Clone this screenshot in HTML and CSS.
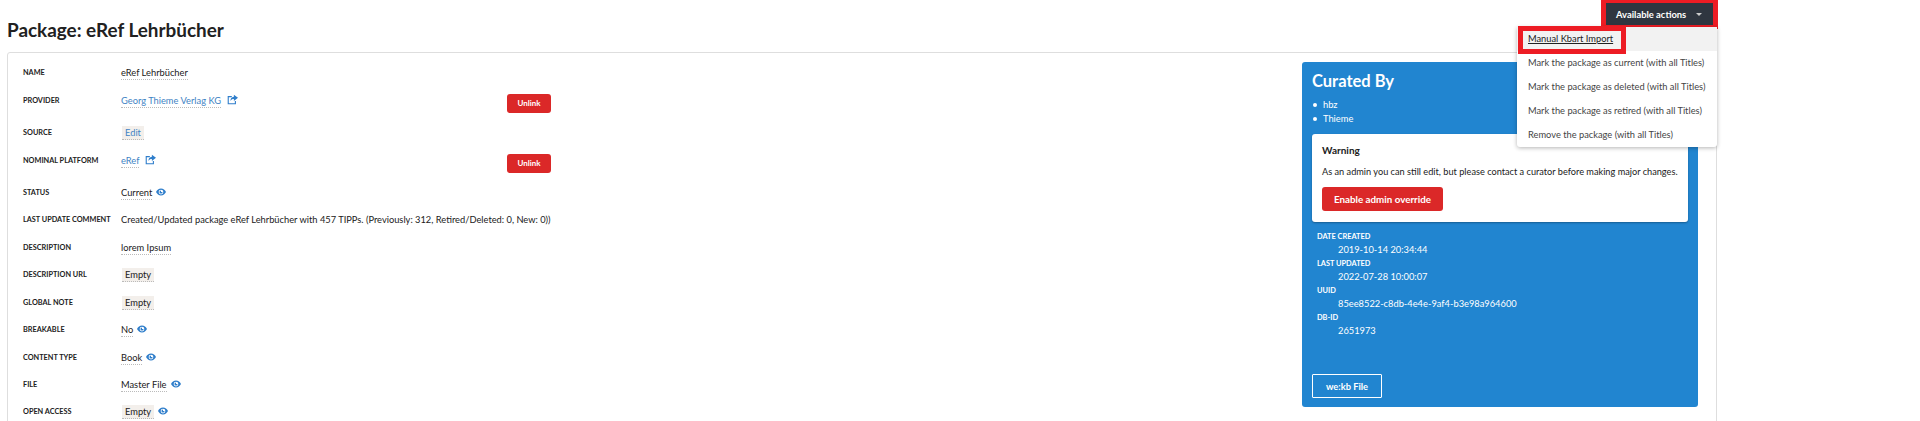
FILE: index.html
```html
<!DOCTYPE html>
<html lang="en">
<head>
  <meta charset="UTF-8">
  <title>Package: eRef Lehrbücher</title>
  <link rel="stylesheet" href="styles.css">
</head>
<body>
  <svg class="defs" width="0" height="0">
    <symbol id="eye" viewBox="0 0 16 16">
      <path d="M8 2.5C4.400 2.500 1.600 5 0 8c1.600 3 4.400 5.500 8 5.500S14.400 11 16 8c-1.600-3-4.400-5.500-8-5.500zm0 9.300A3.800 3.800 0 1 1 8 4.200a3.800 3.800 0 0 1 0 7.600zM8 5.500a2.500 2.500 0 1 0 2.500 2.500H8z"/>
    </symbol>
    <symbol id="share" viewBox="0 0 16 16">
      <path d="M1 3h6v1.600H2.600v8.800h8.800V10H13v5H1z"/>
      <path d="M10 1l6 4.500L10 10V7.300c-2.500 0-4 .9-5 3 0-3.800 1.800-6 5-6.300z"/>
    </symbol>
  </svg>

  <header class="page-header">
    <h1>Package: eRef Lehrbücher</h1>
    <div class="actions">
      <button class="actions-btn">Available actions<span class="caret"></span></button>
      <ul class="actions-menu">
        <li class="marked"><a href="#">Manual Kbart Import</a></li>
        <li>Mark the package as current (with all Titles)</li>
        <li>Mark the package as deleted (with all Titles)</li>
        <li>Mark the package as retired (with all Titles)</li>
        <li>Remove the package (with all Titles)</li>
      </ul>
    </div>
  </header>

  <main class="card">
    <div class="fields">
      <div class="row"><div class="label">Name</div><div class="value"><span class="editable">eRef Lehrbücher</span></div></div>
      <div class="row">
        <div class="label">Provider</div>
        <div class="value"><a class="editable" href="#">Georg Thieme Verlag KG</a><svg class="icon share"><use href="#share"/></svg></div>
        <button class="unlink">Unlink</button>
      </div>
      <div class="row"><div class="label">Source</div><div class="value"><a class="tag link" href="#">Edit</a></div></div>
      <div class="row">
        <div class="label">Nominal Platform</div>
        <div class="value"><a class="editable" href="#">eRef</a><svg class="icon share"><use href="#share"/></svg></div>
        <button class="unlink">Unlink</button>
      </div>
      <div class="row"><div class="label">Status</div><div class="value"><span class="editable">Current</span><svg class="icon eye"><use href="#eye"/></svg></div></div>
      <div class="row"><div class="label">Last Update Comment</div><div class="value">Created/Updated package eRef Lehrbücher with 457 TIPPs. (Previously: 312, Retired/Deleted: 0, New: 0))</div></div>
      <div class="row"><div class="label">Description</div><div class="value"><span class="editable">lorem Ipsum</span></div></div>
      <div class="row"><div class="label">Description URL</div><div class="value"><span class="tag">Empty</span></div></div>
      <div class="row"><div class="label">Global Note</div><div class="value"><span class="tag">Empty</span></div></div>
      <div class="row"><div class="label">Breakable</div><div class="value"><span class="editable">No</span><svg class="icon eye"><use href="#eye"/></svg></div></div>
      <div class="row"><div class="label">Content Type</div><div class="value"><span class="editable">Book</span><svg class="icon eye"><use href="#eye"/></svg></div></div>
      <div class="row"><div class="label">File</div><div class="value"><span class="editable">Master File</span><svg class="icon eye"><use href="#eye"/></svg></div></div>
      <div class="row"><div class="label">Open Access</div><div class="value"><span class="tag">Empty</span><svg class="icon eye"><use href="#eye"/></svg></div></div>
    </div>

    <aside class="curated">
      <h2>Curated By</h2>
      <ul class="curators">
        <li>hbz</li>
        <li>Thieme</li>
      </ul>
      <div class="warning">
        <h3>Warning</h3>
        <p>As an admin you can still edit, but please contact a curator before making major changes.</p>
        <button class="override">Enable admin override</button>
      </div>
      <dl class="meta">
        <dt>Date Created</dt>
        <dd>2019-10-14 20:34:44</dd>
        <dt>Last Updated</dt>
        <dd>2022-07-28 10:00:07</dd>
        <dt>UUID</dt>
        <dd>85ee8522-c8db-4e4e-9af4-b3e98a964600</dd>
        <dt>DB-ID</dt>
        <dd>2651973</dd>
      </dl>
      <button class="file-btn">we:kb File</button>
    </aside>
  </main>
</body>
</html>
```

FILE: styles.css
```css
html, body {
  height: 421px;
  overflow: hidden;
}

body {
  margin: 0;
  background: #fff;
  color: #212121;
  font-family: "Lato", "Open Sans", sans-serif;
  font-size: 9.3px;
  line-height: 14px;
}

a {
  color: #4183c4;
  text-decoration: none;
}

button {
  font-family: inherit;
  cursor: pointer;
}

.defs {
  position: absolute;
}

.page-header {
  display: flex;
  justify-content: space-between;
  align-items: flex-start;
  height: 52px;
  padding: 0 202px 0 7px;
}

h1 {
  margin: 17px 0 0;
  font-size: 18.9px;
  line-height: 26px;
  font-weight: 700;
}

.actions {
  position: relative;
  border: solid #ed1c24;
  border-width: 3px 5px 4px;
}

.actions-btn {
  display: flex;
  align-items: center;
  box-sizing: border-box;
  width: 107px;
  height: 22px;
  padding: 0 0 0 10px;
  border: 0;
  background: #2f3640;
  color: #fff;
  font-size: 9.4px;
  font-weight: 700;
}

.caret {
  margin-left: 10px;
  border: 3px solid transparent;
  border-top: 3px solid #ccc;
  border-bottom: 0;
}

.actions-menu {
  position: absolute;
  top: 24px;
  right: -4px;
  z-index: 2;
  width: 200px;
  margin: 0;
  padding: 0;
  list-style: none;
  background: #fff;
  border-radius: 0 0 3px 3px;
  box-shadow: 0 1px 4px rgba(0, 0, 0, 0.3);
}

.actions-menu li {
  position: relative;
  height: 24px;
  padding-left: 11px;
  line-height: 24px;
  color: #444;
  white-space: nowrap;
}

.actions-menu .marked {
  background: #f2f2f2;
}

.marked a {
  position: relative;
  color: #212121;
  text-decoration: underline;
}

.marked::before {
  content: "";
  position: absolute;
  top: -1px;
  left: 1px;
  width: 98px;
  height: 18px;
  border: 5px solid #ed1c24;
}

.card {
  display: flex;
  justify-content: space-between;
  align-items: flex-start;
  box-sizing: border-box;
  width: 1710px;
  min-height: 400px;
  margin-left: 7px;
  padding: 6.5px 18px 0 15px;
  border: 1px solid #dedede;
  border-radius: 3px;
}

.fields {
  flex: 1;
}

.row {
  display: flex;
  align-items: flex-start;
  padding: 6.72px 0;
}

.label {
  flex: 0 0 98px;
  font-size: 7.3px;
  font-weight: 700;
  text-transform: uppercase;
  white-space: nowrap;
}

.value {
  flex: 0 0 386px;
  white-space: nowrap;
}

.editable {
  padding-bottom: 1px;
  border-bottom: 1px dotted #bbb;
}

.tag {
  display: inline-block;
  padding: 0 3px;
  margin-left: 1px;
  background: #f3efeb;
  border-bottom: 1px dotted #bbb;
  line-height: 13px;
}

.icon {
  fill: #2f7ecb;
  vertical-align: -1px;
}

.share {
  width: 11px;
  height: 11px;
  margin-left: 6px;
}

.eye {
  width: 10px;
  height: 10px;
  margin-left: 4px;
}

.unlink {
  width: 44px;
  height: 19px;
  padding: 0;
  border: 0;
  border-radius: 3px;
  background: #db2828;
  color: #fff;
  font-size: 8px;
  font-weight: 700;
}

.curated {
  display: flex;
  flex-direction: column;
  align-items: flex-start;
  box-sizing: border-box;
  width: 396px;
  height: 345px;
  margin-top: 2.5px;
  padding: 10px 10px 9px;
  background: #2185d0;
  border-radius: 3px;
  color: #fff;
}

h2 {
  margin: 0;
  font-size: 16.5px;
  line-height: 18px;
  font-weight: 700;
}

.curators {
  margin: 8px 0 0;
  padding: 0 0 0 11px;
  list-style: none;
}

.curators li {
  position: relative;
}

.curators li::before {
  content: "";
  position: absolute;
  top: 5px;
  left: -10px;
  width: 4px;
  height: 4px;
  border-radius: 50%;
  background: #fff;
}

.warning {
  box-sizing: border-box;
  width: 376px;
  height: 88px;
  margin-top: 8px;
  padding: 10px;
  background: #fff;
  border-radius: 3px;
  box-shadow: 0 1px 2px rgba(0, 0, 0, 0.3);
  color: #212121;
}

h3 {
  margin: 0;
  font-size: 10px;
  line-height: 12px;
  font-weight: 700;
}

.warning p {
  margin: 9px 0 0;
  font-size: 9.2px;
  white-space: nowrap;
}

.override {
  display: block;
  width: 121px;
  height: 24px;
  margin-top: 8px;
  padding: 0;
  border: 0;
  border-radius: 3px;
  background: #db2828;
  color: #fff;
  font-size: 9.8px;
  font-weight: 700;
}

.meta {
  margin: 8px 0 0 5px;
}

.meta dt {
  font-size: 7.4px;
  font-weight: 700;
  line-height: 13px;
  text-transform: uppercase;
}

.meta dd {
  margin: 0 0 0 21px;
  line-height: 14px;
}

.file-btn {
  width: 70px;
  height: 24px;
  margin-top: auto;
  padding: 0;
  border: 1px solid #fff;
  border-radius: 1px;
  background: transparent;
  color: #fff;
  font-size: 9.3px;
  font-weight: 700;
}
```
